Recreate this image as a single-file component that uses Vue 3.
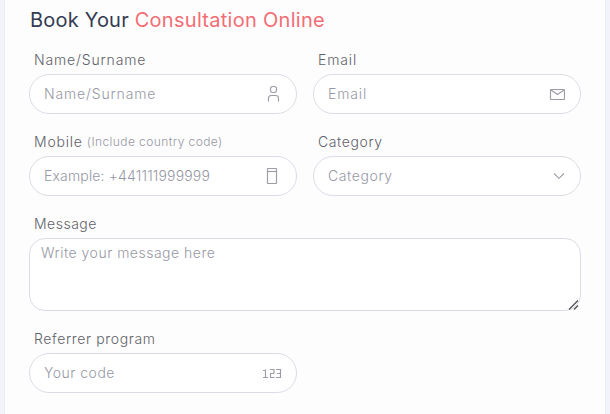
<script setup>
const fields = [
  { id: 'name', label: 'Name/Surname', placeholder: 'Name/Surname', icon: 'user' },
  { id: 'email', label: 'Email', placeholder: 'Email', icon: 'mail' },
  { id: 'mobile', label: 'Mobile', hint: '(Include country code)', placeholder: 'Example: +441111999999', icon: 'phone' },
  { id: 'category', label: 'Category', placeholder: 'Category', icon: 'chevron' },
]
</script>

<template>
  <main class="card">
    <h1 class="title"><span class="lead">Book Your</span> <span class="accent">Consultation Online</span></h1>
    <form class="form">
      <div v-for="f in fields" :key="f.id" class="field" :class="f.id">
        <label class="label" :for="f.id"><span>{{ f.label }}</span><small v-if="f.hint" class="hint">{{ f.hint }}</small></label>
        <div class="control">
          <input :id="f.id" class="input" type="text" :placeholder="f.placeholder" />
          <svg v-if="f.icon === 'user'" class="icon" width="15" height="18" viewBox="0 0 15 18">
            <rect x="4.5" y="1.5" width="6" height="6" rx="2.2" />
            <path d="M2.5 16.5v-3.2q0-2.8 2.8-2.8h4.4q2.8 0 2.8 2.8v3.2" />
          </svg>
          <svg v-else-if="f.icon === 'mail'" class="icon" width="16" height="12" viewBox="0 0 16 12">
            <rect x="1.5" y="1.5" width="14" height="10" rx=".5" />
            <path d="M2 2l6.5 4.5L15 2" />
          </svg>
          <svg v-else-if="f.icon === 'phone'" class="icon" width="12" height="18" viewBox="0 0 12 18">
            <rect x="1.5" y="1.5" width="9" height="15" rx=".5" />
            <path d="M1.5 4.5h9" />
          </svg>
          <svg v-else class="icon" width="12" height="8" viewBox="0 0 12 8">
            <path d="M1 1.5l5 4.8 5-4.8" />
          </svg>
        </div>
      </div>
      <div class="field message">
        <label class="label" for="message"><span>Message</span></label>
        <div class="area">
          <textarea id="message" class="textarea" placeholder="Write your message here"></textarea>
          <svg class="grip" width="12" height="12" viewBox="0 0 12 12"><path d="M1 10.5L10 1.5M6 10.5l4-4" /></svg>
        </div>
      </div>
      <div class="field code">
        <label class="label" for="code"><span>Referrer program</span></label>
        <div class="control">
          <input id="code" class="input" type="text" placeholder="Your code" />
          <svg class="icon" width="20" height="11" viewBox="0 0 20 11">
            <path d="M1 2.5h2.5M3.5 1.5v8M1 9.5h5M8 1.5h4v4H8.5v4h4M14 1.5h4.5v8H14M15 5.5h3.5" />
          </svg>
        </div>
      </div>
    </form>
  </main>
</template>

<style>
body { background: #f3f4fb; overflow: hidden; }
</style>

<style scoped>
.card {
  box-sizing: border-box;
  width: 602px;
  height: 414px;
  margin-left: 4px;
  padding: 6px 24px 0;
  background: #fdfdfd;
  border: solid #eceef6;
  border-width: 0 1px;
  font-family: Inter, "Liberation Sans", sans-serif;
}
.title {
  margin: 0;
  height: 43px;
  padding-left: 1px;
  line-height: 28px;
  font-size: 20px;
  font-weight: 400;
  letter-spacing: .2px;
  color: #343b50;
  white-space: nowrap;
}
.accent { color: #f36d74; letter-spacing: .28px; }
.form {
  display: grid;
  grid-template-columns: 268px 268px;
  gap: 18px 16px;
}
.name, .email { letter-spacing: .85px; }
.mobile .label { letter-spacing: .8px; }
.mobile .control { letter-spacing: .16px; }
.category { letter-spacing: .6px; }
.message { grid-column: 1 / -1; letter-spacing: .5px; }
.code .label { letter-spacing: .64px; }
.code .control { letter-spacing: .5px; }
.label {
  display: flex;
  align-items: center;
  gap: 4px;
  height: 25px;
  padding: 0 0 5px 5px;
  box-sizing: border-box;
  font-size: 14px;
  font-weight: 300;
  color: #5f6269;
  white-space: nowrap;
}
.field { margin-bottom: -1px; }
.hint { font-size: 12px; letter-spacing: .42px; color: #9698a5; }
.control {
  display: flex;
  align-items: center;
  box-sizing: border-box;
  height: 40px;
  padding: 0 15px 0 14px;
  background: #fff;
  border: 1px solid #dcdce7;
  border-radius: 20px;
}
.mobile .control { padding-right: 18px; }
.code .control { padding-right: 14px; }
.input {
  flex: 1;
  min-width: 0;
  padding: 0 0 2px;
  border: 0;
  outline: 0;
  background: transparent;
  font: 300 14px Inter, "Liberation Sans", sans-serif;
  letter-spacing: inherit;
}
.input::placeholder, .textarea::placeholder { color: #9698a5; opacity: 1; }
.icon { flex: none; fill: none; stroke: #9c9da7; stroke-width: 1.15; }
.area { position: relative; height: 73px; }
.textarea {
  display: block;
  box-sizing: border-box;
  width: 100%;
  height: 73px;
  padding: 4px 11px;
  border: 1px solid #dcdce7;
  border-radius: 16px;
  outline: 0;
  resize: none;
  background: #fff;
  font: 300 14px/20px Inter, "Liberation Sans", sans-serif;
  letter-spacing: inherit;
}
.message .area { width: 552px; }
.grip { position: absolute; right: 1px; bottom: 0; fill: none; stroke: #555; stroke-width: 1.4; }
</style>
